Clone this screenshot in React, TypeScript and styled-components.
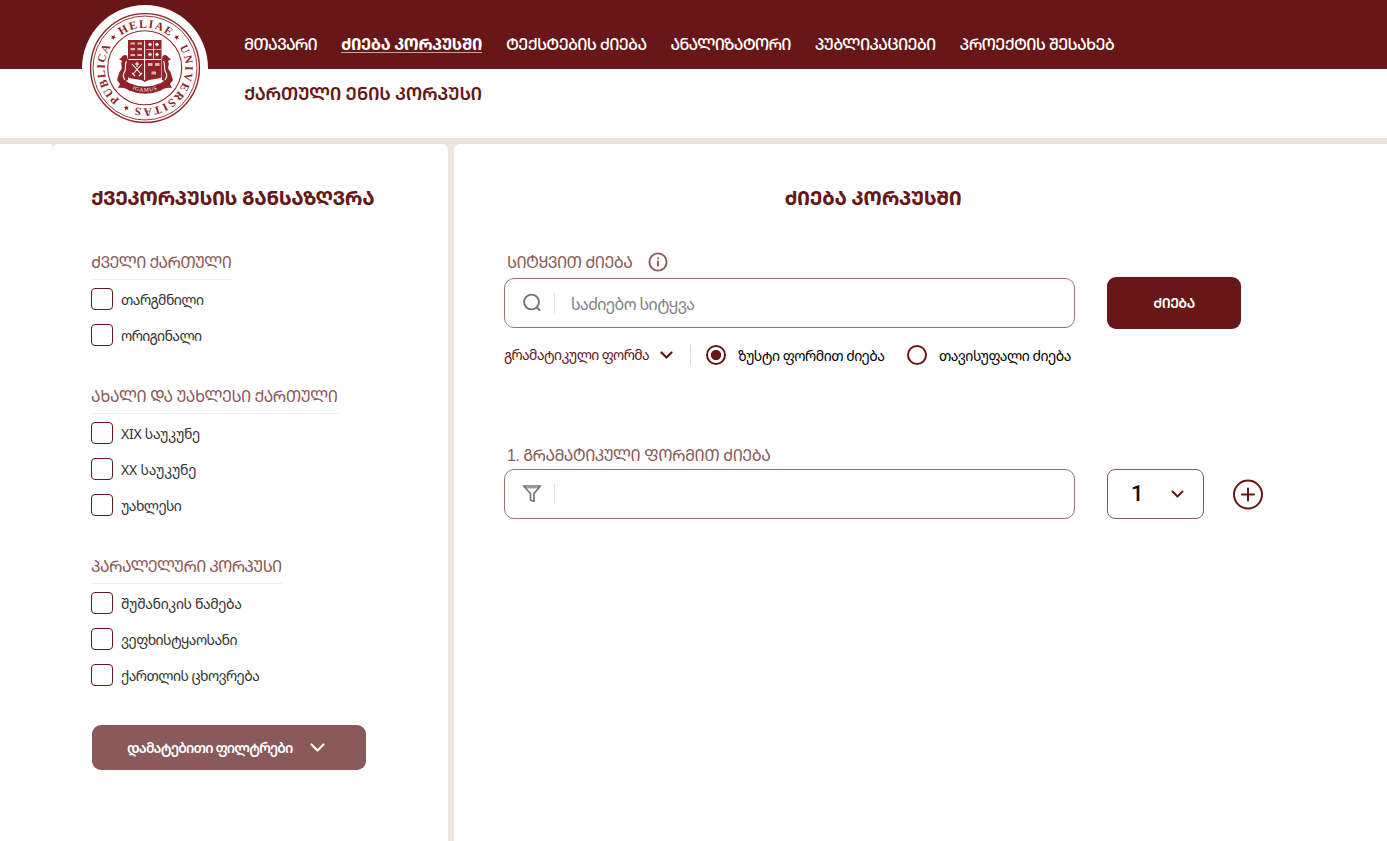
import React from "react";
import styled, { createGlobalStyle } from "styled-components";

const wine = "#671717";
const rose = "#8a5a5b";
const sand = "#ebe4df";
const seal = "#8e2427";

const Global = createGlobalStyle`
  * { box-sizing: border-box; }
  body { margin: 0; background: #fff; font-family: "Noto Sans Georgian", "DejaVu Sans", sans-serif; }
`;

const Page = styled.div`
  height: 841px;
  display: flex;
  flex-direction: column;
  overflow: hidden;
`;

const Header = styled.header`
  height: 138px;
  display: flex;
  background: linear-gradient(${wine} 69px, #fff 69px);
  padding-left: 82px;
`;

const Logo = styled.svg`
  width: 126px;
  height: 126px;
  margin-top: 5px;
  flex: none;
`;

const HeaderText = styled.div`
  margin-left: 36px;
  display: flex;
  flex-direction: column;
`;

const Nav = styled.nav`
  height: 69px;
  padding-top: 32px;
  display: flex;
  gap: 24px;
`;

const Text = styled.span<{ $size: number; $ls?: number; $weight?: number; $color?: string; $drop?: number }>`
  display: inline-block;
  white-space: nowrap;
  font-size: ${(p) => p.$size}px;
  letter-spacing: ${(p) => p.$ls ?? 0}px;
  font-weight: ${(p) => p.$weight ?? 400};
  color: ${(p) => p.$color ?? wine};
  line-height: 24px;
  padding-top: ${(p) => p.$drop ?? 0}px;
`;

const LatinFirst = styled(Text)`
  font-family: "Liberation Sans", "Noto Sans Georgian", sans-serif;
`;

const NavLink = styled(Text)<{ $active?: boolean }>`
  height: 21px;
  border-bottom: ${(p) => (p.$active ? "1px solid #c4a5a5" : "0")};
`;

const Brand = styled.div`
  padding-top: 12px;
`;

const Body = styled.div`
  flex: 1;
  display: flex;
  gap: 6px;
  border-top: 6px solid ${sand};
  background: linear-gradient(90deg, #fff 52px, ${sand} 52px);
  padding-left: 52px;
`;

const Sidebar = styled.aside`
  width: 396px;
  background: #fff;
  border-radius: 6px 6px 0 0;
  padding: 42px 40px 0;
  display: flex;
  flex-direction: column;
  align-items: flex-start;
`;

const SideTitle = styled(Text)`
  text-indent: -1px;
`;

const Groups = styled.div`
  margin-top: 38px;
  display: flex;
  flex-direction: column;
  gap: 36px;
`;

const Group = styled.section``;

const GroupTitle = styled.div`
  display: flex;
  width: max-content;
  height: 32px;
  padding-top: 2px;
  border-bottom: 1px solid #eeeeee;
`;

const Options = styled.div`
  margin: 8px 0 0 -1px;
  display: flex;
  flex-direction: column;
  gap: 14px;
`;

const Option = styled.label`
  height: 22px;
  display: flex;
  align-items: center;
  gap: 8px;
`;

const Box = styled.span`
  width: 22px;
  height: 22px;
  border: 1px solid ${wine};
  border-radius: 4px;
`;

const MoreButton = styled.button`
  margin-top: 39px;
  width: 274px;
  height: 45px;
  border: 0;
  border-radius: 9px;
  background: ${rose};
  display: flex;
  align-items: center;
  padding: 0 0 0 35px;
  gap: 17px;
  font-family: inherit;
`;

const Main = styled.main`
  flex: 1;
  background: #fff;
  border-radius: 6px 0 0 0;
  padding: 42px 0 0 50px;
`;

const MainTitle = styled.div`
  width: 738px;
  display: flex;
  justify-content: center;
`;

const FieldLabel = styled.div<{ $top: number; $h: number }>`
  margin-top: ${(p) => p.$top}px;
  height: ${(p) => p.$h}px;
  padding-left: 3px;
  display: flex;
  align-items: flex-start;
  gap: 16px;
`;

const FieldRow = styled.div`
  height: 50px;
  display: flex;
  align-items: center;
`;

const Field = styled.div`
  width: 571px;
  height: 50px;
  border: 1px solid #a66e72;
  border-radius: 10px;
  display: flex;
  align-items: center;
  padding-left: 17px;
`;

const Divider = styled.span<{ $l: number; $r: number }>`
  width: 1px;
  height: 20px;
  background: #dcdcdc;
  margin: 0 ${(p) => p.$r}px 0 ${(p) => p.$l}px;
`;

const SearchButton = styled.button`
  margin: -1px 0 -1px 32px;
  width: 134px;
  height: 52px;
  border: 0;
  border-radius: 9px;
  background: ${wine};
  font-family: inherit;
`;

const Modes = styled.div`
  height: 24px;
  margin-top: 15px;
  display: flex;
  align-items: center;
`;

const Mode = styled.div<{ $w: number }>`
  width: ${(p) => p.$w}px;
  display: flex;
  align-items: center;
`;

const Radio = styled.span<{ $on?: boolean }>`
  width: 20px;
  height: 20px;
  border: 2px solid ${wine};
  border-radius: 50%;
  margin-right: 12px;
  background: ${(p) => (p.$on ? `radial-gradient(circle, ${wine} 4.8px, #fff 5.4px)` : "#fff")};
`;

const CountSelect = styled.div`
  margin-left: 32px;
  width: 97px;
  height: 50px;
  border: 1px solid ${rose};
  border-radius: 8px;
  display: flex;
  align-items: center;
  justify-content: space-between;
  padding: 0 19px 2px 23px;
  font: 500 22px Roboto, sans-serif;
  color: #111;
`;

const Icon = styled.svg<{ $l?: number; $t?: number }>`
  flex: none;
  fill: none;
  stroke-linecap: round;
  stroke-linejoin: round;
  margin-left: ${(p) => p.$l ?? 0}px;
  margin-top: ${(p) => p.$t ?? 0}px;
`;

const Chevron = ({ w, h, color, sw, left, top }: { w: number; h: number; color: string; sw: number; left?: number; top?: number }) => (
  <Icon width={w} height={h} viewBox={`0 0 ${w} ${h}`} stroke={color} strokeWidth={sw} $l={left} $t={top}>
    <path d={`M1.5 1.5L${w / 2} ${h - 1.5}L${w - 1.5} 1.5`} />
  </Icon>
);

const University = () => (
  <Logo viewBox="-63 -63 126 126">
    <defs>
      <path id="ring" d="M0 40.3A40.3 40.3 0 0 1 0 -40.3A40.3 40.3 0 0 1 0 40.3A40.3 40.3 0 0 1 0 -40.3" />
      <path id="motto" d="M-14 20.5Q0 27 14 20.5" />
    </defs>
    <circle r="63" fill="#fff" />
    <g fill="none" stroke={seal}>
      <circle r="54.4" strokeWidth="1.4" />
      <circle r="52" strokeWidth="0.9" />
      <circle r="37" cx="-.3" cy="-.3" strokeWidth="1.1" />
    </g>
    <g fill={seal} fontFamily="Liberation Serif, serif" fontWeight="700" fontSize="11.5">
      <text><textPath href="#ring" startOffset="101" textLength="52">HELIAE</textPath></text>
      <text><textPath href="#ring" startOffset="167.5" textLength="95">UNIVERSITAS</textPath></text>
      <text><textPath href="#ring" startOffset="27" textLength="59">PUBLICA</textPath></text>
      {[-46, 46, 205].map((a) => (
        <path key={a} transform={`rotate(${a}) translate(0 -44.3)`} d="M0-2.600L.8-.8L2.600-.6L1.200.7L1.600 2.400L0 1.500L-1.600 2.400L-1.200.7L-2.600-.6L-.8-.8Z" />
      ))}
    </g>
    <path fill={seal} d="M-17-28H16.500V9C14 12 5 10 0 14C-5 10-14 12-17 9Z" />
    <path d="M-.4-27.500V12M-16.500-8.500H16" stroke="#fff" strokeWidth="1" />
    <g stroke="#dcb3b4" strokeWidth="2.200" fill="none">
      <path d="M-14.500-24.500H-10M-7.500-24.500H-3M-14.500-18.800H-10M-7.500-18.800H-3M-14.500-13H-10M-7.500-13H-3" />
      <path d="M3-3.500H7.500M10-3.500H14.500M6.500 5H11" strokeWidth="3" />
      <path d="M3.200-23.500H6.800M5-25.300V-21.700M10.200-23.500H13.800M12-25.300V-21.700M3.200-13.500H6.800M5-15.300V-11.700M10.200-13.500H13.800M12-15.300V-11.700" stroke="#fff" strokeWidth="1.300" />
      <path d="M1-18.500H16M8.500-27V-9" stroke="#fff" strokeWidth=".7" />
      <path d="M-13-4L-4 6M-3-4L-12 6M-13 5L-10 8M-3 5L-6 8M-8-6V-1M-10-4H-6" stroke="#fff" strokeWidth="1.100" />
    </g>
    <g fill={seal}>
      <path d="M-18-12C-20-14-22-13-24-10L-26-9L-23-7C-25-3-22-1-24 2C-27 5-26 8-28 11L-25 15L-17 12V-8Z" />
      <path d="M17.500-12C20-14 22-13 24-10L26-9L23-7C25-3 22-1 24 2C27 5 26 8 28 11L25 15L17 12V-8Z" />
      <path d="M-28 12C-23 11-18 13-16 15Q0 22 16 15C18 13 23 11 28 12L25 16L27 20C21 19 18 21 16 22.500Q0 29-16 22.500C-18 21-21 19-27 20L-25 16Z" />
    </g>
    <path d="M-18.500-7C-21-3-18 1-21 5C-23 8-21 10-20 12M18.500-7C21-3 18 1 21 5C23 8 21 10 20 12" fill="none" stroke="#fff" strokeWidth="1.100" />
    <text fill="#fff" fontFamily="Liberation Serif, serif" fontSize="5.5" textAnchor="middle">
      <textPath href="#motto" startOffset="50%" letterSpacing=".8">IGAMUS</textPath>
    </text>
  </Logo>
);

const nav: { t: string; ls: number; on?: boolean }[] = [
  { t: "ᲛᲗᲐᲕᲐᲠᲘ", ls: -0.86 },
  { t: "ᲫᲘᲔᲑᲐ ᲙᲝᲠᲞᲣᲡᲨᲘ", ls: -0.36, on: true },
  { t: "ᲢᲔᲥᲡᲢᲔᲑᲘᲡ ᲫᲘᲔᲑᲐ", ls: -0.72 },
  { t: "ᲐᲜᲐᲚᲘᲖᲐᲢᲝᲠᲘ", ls: -0.86 },
  { t: "ᲞᲣᲑᲚᲘᲙᲐᲪᲘᲔᲑᲘ", ls: -0.7 },
  { t: "ᲞᲠᲝᲔᲥᲢᲘᲡ ᲨᲔᲡᲐᲮᲔᲑ", ls: -0.72 },
];

const groups: { t: string; ls: number; items: [string, number][] }[] = [
  { t: "ᲫᲕᲔᲚᲘ ᲥᲐᲠᲗᲣᲚᲘ", ls: -0.6, items: [["თარგმნილი", -0.54], ["ორიგინალი", -0.6]] },
  { t: "ᲐᲮᲐᲚᲘ ᲓᲐ ᲣᲐᲮᲚᲔᲡᲘ ᲥᲐᲠᲗᲣᲚᲘ", ls: -0.43, items: [["XIX საუკუნე", -0.26], ["XX საუკუნე", -0.2], ["უახლესი", -0.55]] },
  { t: "ᲞᲐᲠᲐᲚᲔᲚᲣᲠᲘ ᲙᲝᲠᲞᲣᲡᲘ", ls: -0.66, items: [["შუშანიკის წამება", -0.37], ["ვეფხისტყაოსანი", -0.58], ["ქართლის ცხოვრება", -0.55]] },
];

export default function App() {
  return (
    <Page>
      <Global />
      <Header>
        <University />
        <HeaderText>
          <Nav>
            {nav.map((n) => (
              <NavLink key={n.t} $size={16} $weight={n.on ? 700 : 500} $color="#fff" $active={n.on} $ls={n.ls}>{n.t}</NavLink>
            ))}
          </Nav>
          <Brand><Text $size={18} $weight={600} $ls={-0.28}>ᲥᲐᲠᲗᲣᲚᲘ ᲔᲜᲘᲡ ᲙᲝᲠᲞᲣᲡᲘ</Text></Brand>
        </HeaderText>
      </Header>
      <Body>
        <Sidebar>
          <SideTitle $size={20} $weight={700} $ls={-0.42}>ᲥᲕᲔᲙᲝᲠᲞᲣᲡᲘᲡ ᲒᲐᲜᲡᲐᲖᲦᲕᲠᲐ</SideTitle>
          <Groups>
            {groups.map((g) => (
              <Group key={g.t}>
                <GroupTitle><SideTitle $size={16} $color={rose} $ls={g.ls}>{g.t}</SideTitle></GroupTitle>
                <Options>
                  {g.items.map(([t, ls]) => (
                    <Option key={t}><Box /><Text $size={14} $color="#333" $ls={ls} $drop={2}>{t}</Text></Option>
                  ))}
                </Options>
              </Group>
            ))}
          </Groups>
          <MoreButton>
            <Text $size={14} $weight={600} $color="#fff" $ls={-0.88} $drop={1}>დამატებითი ფილტრები</Text>
            <Chevron w={15} h={9} color="#fff" sw={2.2} />
          </MoreButton>
        </Sidebar>
        <Main>
          <MainTitle><Text $size={20} $weight={700} $ls={-0.4}>ᲫᲘᲔᲑᲐ ᲙᲝᲠᲞᲣᲡᲨᲘ</Text></MainTitle>
          <FieldLabel $top={40} $h={28}>
            <Text $size={16} $color={rose} $ls={-0.58}>ᲡᲘᲢᲧᲕᲘᲗ ᲫᲘᲔᲑᲐ</Text>
            <Icon width="20" height="20" viewBox="0 0 20 20" stroke={rose} strokeWidth="1.900" $t={2}>
              <circle cx="10" cy="10" r="8.600" /><path d="M10 9.500V13.500M10 6.300V6.400" />
            </Icon>
          </FieldLabel>
          <FieldRow>
            <Field>
              <Icon width="20" height="20" viewBox="0 0 20 20" stroke="#757575" strokeWidth="1.900">
                <circle cx="9.500" cy="9" r="7.400" /><path d="M15 14.500L17.500 17" />
              </Icon>
              <Divider $l={12} $r={16} />
              <Text $size={16} $color="#808080" $ls={-0.6} $drop={2}>საძიებო სიტყვა</Text>
            </Field>
            <SearchButton><Text $size={14} $weight={600} $color="#fff" $ls={-0.6}>ᲫᲘᲔᲑᲐ</Text></SearchButton>
          </FieldRow>
          <Modes>
            <Mode $w={186}>
              <Text $size={14} $ls={-0.63}>გრამატიკული ფორმა</Text>
              <Chevron w={13} h={8} color={wine} sw={2.3} left={11} />
            </Mode>
            <Divider $l={0} $r={15} />
            <Mode $w={201}>
              <Radio $on />
              <Text $size={14} $color="#000" $ls={-0.5} $drop={2}>ზუსტი ფორმით ძიება</Text>
            </Mode>
            <Mode $w={180}>
              <Radio />
              <Text $size={14} $color="#000" $ls={-0.47} $drop={2}>თავისუფალი ძიება</Text>
            </Mode>
          </Modes>
          <FieldLabel $top={77} $h={25}>
            <LatinFirst $size={16} $color={rose} $ls={-0.55}>1. ᲒᲠᲐᲛᲐᲢᲘᲙᲣᲚᲘ ᲤᲝᲠᲛᲘᲗ ᲫᲘᲔᲑᲐ</LatinFirst>
          </FieldLabel>
          <FieldRow>
            <Field>
              <Icon width="20" height="20" viewBox="0 0 20 20" stroke="#757575" strokeWidth="1.700">
                <path d="M1.500 2H18.500L12 9.500V17.500L8.500 16V9.500Z" />
                <path d="M4 3.800H16" strokeWidth="1" />
              </Icon>
              <Divider $l={12} $r={0} />
            </Field>
            <CountSelect>1<Chevron w={13} h={8} color={wine} sw={2} top={2} /></CountSelect>
            <Icon width="32" height="32" viewBox="0 0 32 32" $l={28} stroke={wine} strokeWidth="2">
              <circle cx="16" cy="16.500" r="14" /><path d="M16 10.500V22.500M10 16.500H22" />
            </Icon>
          </FieldRow>
        </Main>
      </Body>
    </Page>
  );
}
